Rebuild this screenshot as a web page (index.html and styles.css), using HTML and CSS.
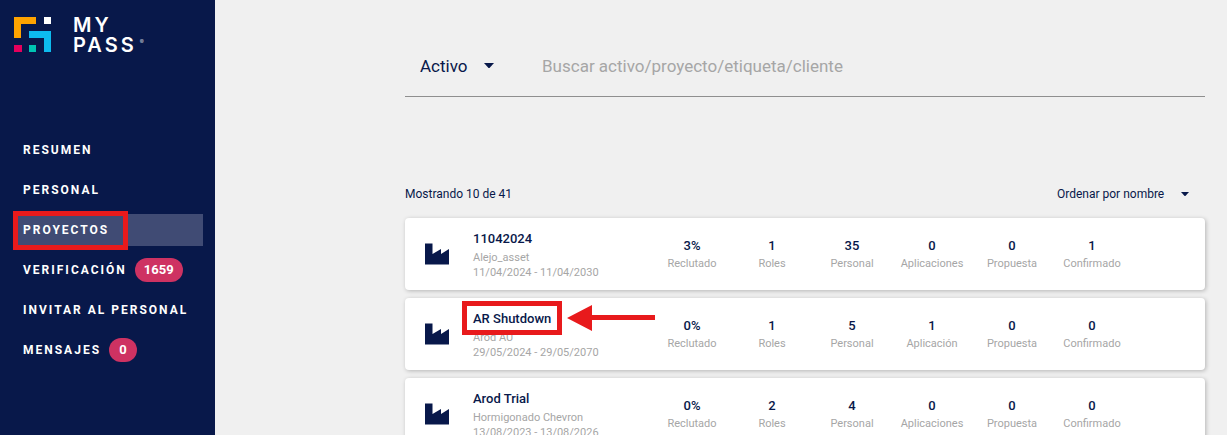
FILE: index.html
```html
<!DOCTYPE html>
<html lang="es">
<head>
<meta charset="utf-8">
<meta name="viewport" content="width=device-width, initial-scale=1">
<title>MyPass – Proyectos</title>
<link rel="stylesheet" href="styles.css">
</head>
<body>
<svg class="sprite" aria-hidden="true">
  <symbol id="factory" viewBox="0 0 24 22"><path d="M0 0.5H7.5V11L16 6V11L24 6V21.5H0Z"/></symbol>
  <symbol id="caret" viewBox="0 0 10 5"><path d="M0 0H10L5.5 5H4.5Z"/></symbol>
</svg>
<div class="app">
  <aside class="sidebar">
    <a class="brand" href="#" aria-label="MyPass">
      <svg class="brand-mark" viewBox="0 0 37 35" aria-hidden="true">
        <path fill="#ffa300" d="M0 0H22V7H7V21H0Z"/>
        <path fill="#fff" d="M30 0H37V7H30Z"/>
        <path fill="#0dbbef" d="M15 14H37V35H30V21H15Z"/>
        <path fill="#e6005c" d="M0 28H8V35H0Z"/>
        <path fill="#00c4b3" d="M15 28H22V35H15Z"/>
      </svg>
      <span class="brand-name">MY<br>PASS<span class="brand-reg">®</span></span>
    </a>
    <nav class="nav">
      <a class="nav-link" href="#">RESUMEN</a>
      <a class="nav-link" href="#">PERSONAL</a>
      <a class="nav-link nav-link-active" href="#" aria-current="page">PROYECTOS<span class="mark mark-nav"></span></a>
      <a class="nav-link" href="#">VERIFICACIÓN<span class="badge">1659</span></a>
      <a class="nav-link" href="#">INVITAR AL PERSONAL</a>
      <a class="nav-link" href="#">MENSAJES<span class="badge">0</span></a>
    </nav>
  </aside>
  <main class="content">
    <form class="search">
      <span class="picker picker-large">
        <select aria-label="Tipo de búsqueda"><option>Activo</option></select>
        <svg class="caret" aria-hidden="true"><use href="#caret"/></svg>
      </span>
      <input class="search-input" type="text" aria-label="Buscar" placeholder="Buscar activo/proyecto/etiqueta/cliente">
    </form>
    <div class="toolbar">
      <span>Mostrando 10 de 41</span>
      <span class="picker">
        <select aria-label="Ordenar"><option>Ordenar por nombre</option></select>
        <svg class="caret caret-small" aria-hidden="true"><use href="#caret"/></svg>
      </span>
    </div>
    <div class="cards">
      <article class="card">
        <svg class="factory" aria-hidden="true"><use href="#factory"/></svg>
        <div class="info"><h2>11042024</h2><p>Alejo_asset</p><p>11/04/2024 - 11/04/2030</p></div>
        <dl class="stats">
          <div><dd>3%</dd><dt>Reclutado</dt></div>
          <div><dd>1</dd><dt>Roles</dt></div>
          <div><dd>35</dd><dt>Personal</dt></div>
          <div><dd>0</dd><dt>Aplicaciones</dt></div>
          <div><dd>0</dd><dt>Propuesta</dt></div>
          <div><dd>1</dd><dt>Confirmado</dt></div>
        </dl>
      </article>
      <article class="card">
        <svg class="factory" aria-hidden="true"><use href="#factory"/></svg>
        <div class="info"><h2>AR Shutdown</h2><p>Arod AU</p><p>29/05/2024 - 29/05/2070</p></div>
        <dl class="stats">
          <div><dd>0%</dd><dt>Reclutado</dt></div>
          <div><dd>1</dd><dt>Roles</dt></div>
          <div><dd>5</dd><dt>Personal</dt></div>
          <div><dd>1</dd><dt>Aplicación</dt></div>
          <div><dd>0</dd><dt>Propuesta</dt></div>
          <div><dd>0</dd><dt>Confirmado</dt></div>
        </dl>
        <span class="mark mark-card"></span>
        <svg class="arrow" viewBox="0 0 88 26" aria-hidden="true"><path fill="#e81a1c" d="M0 13L25 0V10H88V15H25V26Z"/></svg>
      </article>
      <article class="card">
        <svg class="factory" aria-hidden="true"><use href="#factory"/></svg>
        <div class="info"><h2>Arod Trial</h2><p>Hormigonado Chevron</p><p>13/08/2023 - 13/08/2026</p></div>
        <dl class="stats">
          <div><dd>0%</dd><dt>Reclutado</dt></div>
          <div><dd>2</dd><dt>Roles</dt></div>
          <div><dd>4</dd><dt>Personal</dt></div>
          <div><dd>0</dd><dt>Aplicaciones</dt></div>
          <div><dd>0</dd><dt>Propuesta</dt></div>
          <div><dd>0</dd><dt>Confirmado</dt></div>
        </dl>
      </article>
    </div>
  </main>
</div>
</body>
</html>
```
FILE: styles.css
```css
* {
  box-sizing: border-box;
  margin: 0;
}

body {
  background: #f0f0f0;
  color: #08184a;
  font: 13px/16px Roboto, "Liberation Sans", sans-serif;
}

.sprite {
  display: none;
}

.app {
  display: flex;
  height: 100vh;
  overflow: hidden;
}

.sidebar {
  flex: none;
  width: 215px;
  padding: 14px 12px 0 13px;
  background: #08184a;
}

.brand {
  display: flex;
  align-items: center;
  gap: 22px;
  height: 41px;
  padding-left: 1px;
  color: #fff;
  text-decoration: none;
}

.brand-mark {
  width: 37px;
  height: 35px;
}

.brand-name {
  font: 600 20px/20px Inter, sans-serif;
  letter-spacing: 3px;
}

.brand-reg {
  margin-left: 3px;
  font-size: 6px;
  line-height: 6px;
  vertical-align: 8px;
  opacity: 0.7;
}

.nav {
  display: grid;
  gap: 8px;
  margin-top: 79px;
}

.nav-link {
  position: relative;
  display: flex;
  align-items: center;
  gap: 8px;
  height: 32px;
  padding-left: 10px;
  color: #fff;
  font-size: 12px;
  font-weight: 700;
  letter-spacing: 2px;
  text-decoration: none;
  white-space: nowrap;
}

.nav-link-active {
  background: #404b74;
}

.badge {
  min-width: 28px;
  padding: 0 9px;
  border-radius: 12px;
  background: #ce3262;
  font-size: 13px;
  letter-spacing: 0;
  line-height: 24px;
  text-align: center;
}

.mark {
  position: absolute;
  border: 5px solid #e81a1c;
}

.mark-nav {
  inset: -3px 75px -4px 0;
}

.mark-card {
  top: 3px;
  left: 57px;
  width: 100px;
  height: 34px;
}

.arrow {
  position: absolute;
  top: 7px;
  left: 162px;
  width: 88px;
  height: 26px;
}

.content {
  flex: 1;
  min-width: 0;
  padding: 35px 22px 0 190px;
}

.search {
  display: flex;
  align-items: center;
  gap: 48px;
  height: 62px;
  padding-left: 15px;
  border-bottom: 1px solid #8f8f8f;
}

.picker {
  display: inline-flex;
  align-items: center;
  gap: 16px;
}

.picker select {
  padding: 0;
  border: 0;
  background: none;
  color: inherit;
  font: inherit;
  appearance: none;
}

.picker-large {
  font-size: 17px;
  line-height: 20px;
}

.caret {
  width: 10px;
  height: 5px;
  fill: #08184a;
}

.caret-small {
  width: 8px;
  height: 4px;
}

.search-input {
  flex: 1;
  min-width: 0;
  padding: 0;
  border: 0;
  background: none;
  color: inherit;
  font: 17px/20px Roboto, sans-serif;
}

.search-input::placeholder {
  color: #a6a6a6;
}

.toolbar {
  display: flex;
  align-items: center;
  justify-content: space-between;
  height: 20px;
  margin-top: 87px;
  padding-right: 16px;
  font-size: 12px;
}

.cards {
  display: grid;
  gap: 8px;
  margin-top: 14px;
}

.card {
  position: relative;
  display: flex;
  align-items: center;
  height: 72px;
  padding: 0 73px 0 20px;
  border-radius: 4px;
  background: #fff;
  box-shadow: 1px 1px 4px rgb(0 0 0 / 25%);
}

.factory {
  flex: none;
  width: 24px;
  height: 22px;
  fill: #08184a;
}

.info {
  flex: 1;
  margin-left: 24px;
  padding-top: 2px;
  color: #a6a6a6;
  font-size: 11px;
  line-height: 15px;
  white-space: nowrap;
}

.info h2 {
  margin-bottom: 3px;
  color: #08184a;
  font-size: 13px;
  font-weight: 500;
  line-height: 16px;
}

.stats {
  display: grid;
  grid-template-columns: repeat(6, 80px);
  padding-top: 2px;
  text-align: center;
}

.stats dd {
  font-weight: 500;
  line-height: 18px;
}

.stats dt {
  color: #a6a6a6;
  font-size: 11px;
  line-height: 18px;
}
```
